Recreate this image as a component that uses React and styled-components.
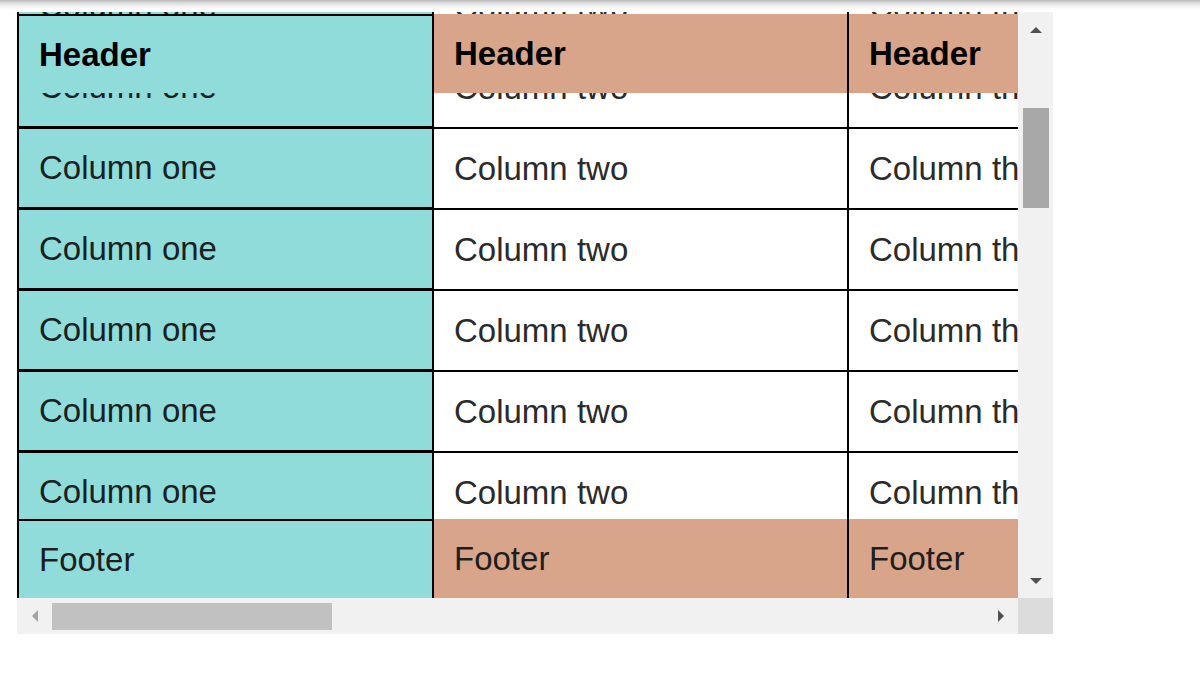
import React, { useLayoutEffect, useRef } from "react";
import styled, { createGlobalStyle, css } from "styled-components";

const TEAL = "#8fdcdb";
const SALMON = "#d9a58a";

const GlobalStyle = createGlobalStyle`
  html, body {
    margin: 0;
    padding: 0;
    background: #fff;
  }
  body {
    font-family: "Liberation Sans", Arial, sans-serif;
  }
`;

const TopShade = styled.div`
  height: 12px;
  background: linear-gradient(to bottom, #b8b8b8 0, #dedede 3px, #f6f6f6 7px, #fff 10px);
`;

const Frame = styled.div`
  margin-left: 17px;
  display: grid;
  grid-template-columns: 1001px 35px;
  grid-template-rows: 586px 36px;
  width: 1036px;
`;

const Viewport = styled.div`
  overflow: hidden;
  position: relative;
`;

const Table = styled.table`
  border-collapse: separate;
  border-spacing: 0;
  table-layout: fixed;
  width: ${(p) => p.$width}px;
  font-size: 33px;
`;

const cellBase = css`
  box-sizing: content-box;
  padding: 0 20px;
  text-align: left;
  vertical-align: middle;
  white-space: nowrap;
  overflow: hidden;
  border-right: 2px solid #000;
  ${(p) =>
    p.$first &&
    css`
      position: sticky;
      left: 0;
      border-left: 2px solid #000;
      background: ${TEAL};
    `}
`;

const HeadCell = styled.th`
  ${cellBase}
  position: sticky;
  top: 2px;
  z-index: 2;
  height: 79px;
  background: ${(p) => (p.$first ? TEAL : SALMON)};
  color: #000;
  font-weight: bold;
  ${(p) =>
    p.$first &&
    css`
      z-index: 4;
      height: 77px;
      border-top: 2px solid #000;
    `}
`;

const BodyCell = styled.td`
  ${cellBase}
  height: 79px;
  border-bottom: 2px solid #000;
  background: #fff;
  color: #2b2b2b;
  ${(p) =>
    p.$first &&
    css`
      z-index: 1;
      height: 78px;
      border-bottom: 3px solid #000;
      background: ${TEAL};
      color: #1a1f22;
    `}
`;

const FootCell = styled.td`
  ${cellBase}
  position: sticky;
  bottom: 0;
  z-index: 2;
  height: 79px;
  background: ${(p) => (p.$first ? TEAL : SALMON)};
  color: #1e1e1e;
  ${(p) =>
    p.$first &&
    css`
      z-index: 4;
      height: 77px;
      border-top: 2px solid #000;
    `}
`;

const VTrack = styled.div`
  background: #f1f1f1;
  display: flex;
  flex-direction: column;
  align-items: center;
`;

const HTrack = styled.div`
  background: #f1f1f1;
  display: flex;
  align-items: center;
`;

const Corner = styled.div`
  background: #dcdcdc;
`;

const ArrowButton = styled.div`
  width: 35px;
  height: 35px;
  flex: 0 0 35px;
  display: flex;
  align-items: center;
  justify-content: center;
  color: ${(p) => (p.$disabled ? "#a3a3a3" : "#505050")};
`;

const VSpace = styled.div`
  flex: 1;
  width: 100%;
  display: flex;
  flex-direction: column;
  align-items: center;
`;

const VThumb = styled.div`
  margin-top: 61px;
  width: 26px;
  height: 100px;
  background: #a8a8a8;
`;

const HSpace = styled.div`
  flex: 1;
  height: 100%;
  display: flex;
  align-items: center;
`;

const HThumb = styled.div`
  width: 280px;
  height: 27px;
  background: #c1c1c1;
`;

function Arrow({ dir }) {
  const points = {
    up: "0,6 6,0 12,6",
    down: "0,0 12,0 6,6",
    left: "6,0 6,12 0,6",
    right: "0,0 6,6 0,12",
  }[dir];
  const vertical = dir === "up" || dir === "down";
  return (
    <svg
      width={vertical ? 12 : 6}
      height={vertical ? 6 : 12}
      viewBox={vertical ? "0 0 12 6" : "0 0 6 12"}
    >
      <polygon points={points} fill="currentColor" />
    </svg>
  );
}

const names = ["one", "two", "three"];
const rows = Array.from({ length: 10 }, (_, i) => i);

export default function App() {
  const viewRef = useRef(null);

  useLayoutEffect(() => {
    if (viewRef.current) viewRef.current.scrollTop = 367;
  }, []);

  const tableWidth = 417 + (names.length - 1) * 415;

  return (
    <>
      <GlobalStyle />
      <TopShade />
      <Frame>
        <Viewport ref={viewRef}>
          <Table $width={tableWidth}>
            <colgroup>
              {names.map((n, i) => (
                <col key={n} style={{ width: i === 0 ? 417 : 415 }} />
              ))}
            </colgroup>
            <thead>
              <tr>
                {names.map((n, i) => (
                  <HeadCell key={n} $first={i === 0}>
                    Header
                  </HeadCell>
                ))}
              </tr>
            </thead>
            <tbody>
              {rows.map((r) => (
                <tr key={r}>
                  {names.map((n, i) => (
                    <BodyCell key={n} $first={i === 0}>
                      Column {n}
                    </BodyCell>
                  ))}
                </tr>
              ))}
            </tbody>
            <tfoot>
              <tr>
                {names.map((n, i) => (
                  <FootCell key={n} $first={i === 0}>
                    Footer
                  </FootCell>
                ))}
              </tr>
            </tfoot>
          </Table>
        </Viewport>
        <VTrack>
          <ArrowButton>
            <Arrow dir="up" />
          </ArrowButton>
          <VSpace>
            <VThumb />
          </VSpace>
          <ArrowButton>
            <Arrow dir="down" />
          </ArrowButton>
        </VTrack>
        <HTrack>
          <ArrowButton $disabled>
            <Arrow dir="left" />
          </ArrowButton>
          <HSpace>
            <HThumb />
          </HSpace>
          <ArrowButton>
            <Arrow dir="right" />
          </ArrowButton>
        </HTrack>
        <Corner />
      </Frame>
    </>
  );
}
